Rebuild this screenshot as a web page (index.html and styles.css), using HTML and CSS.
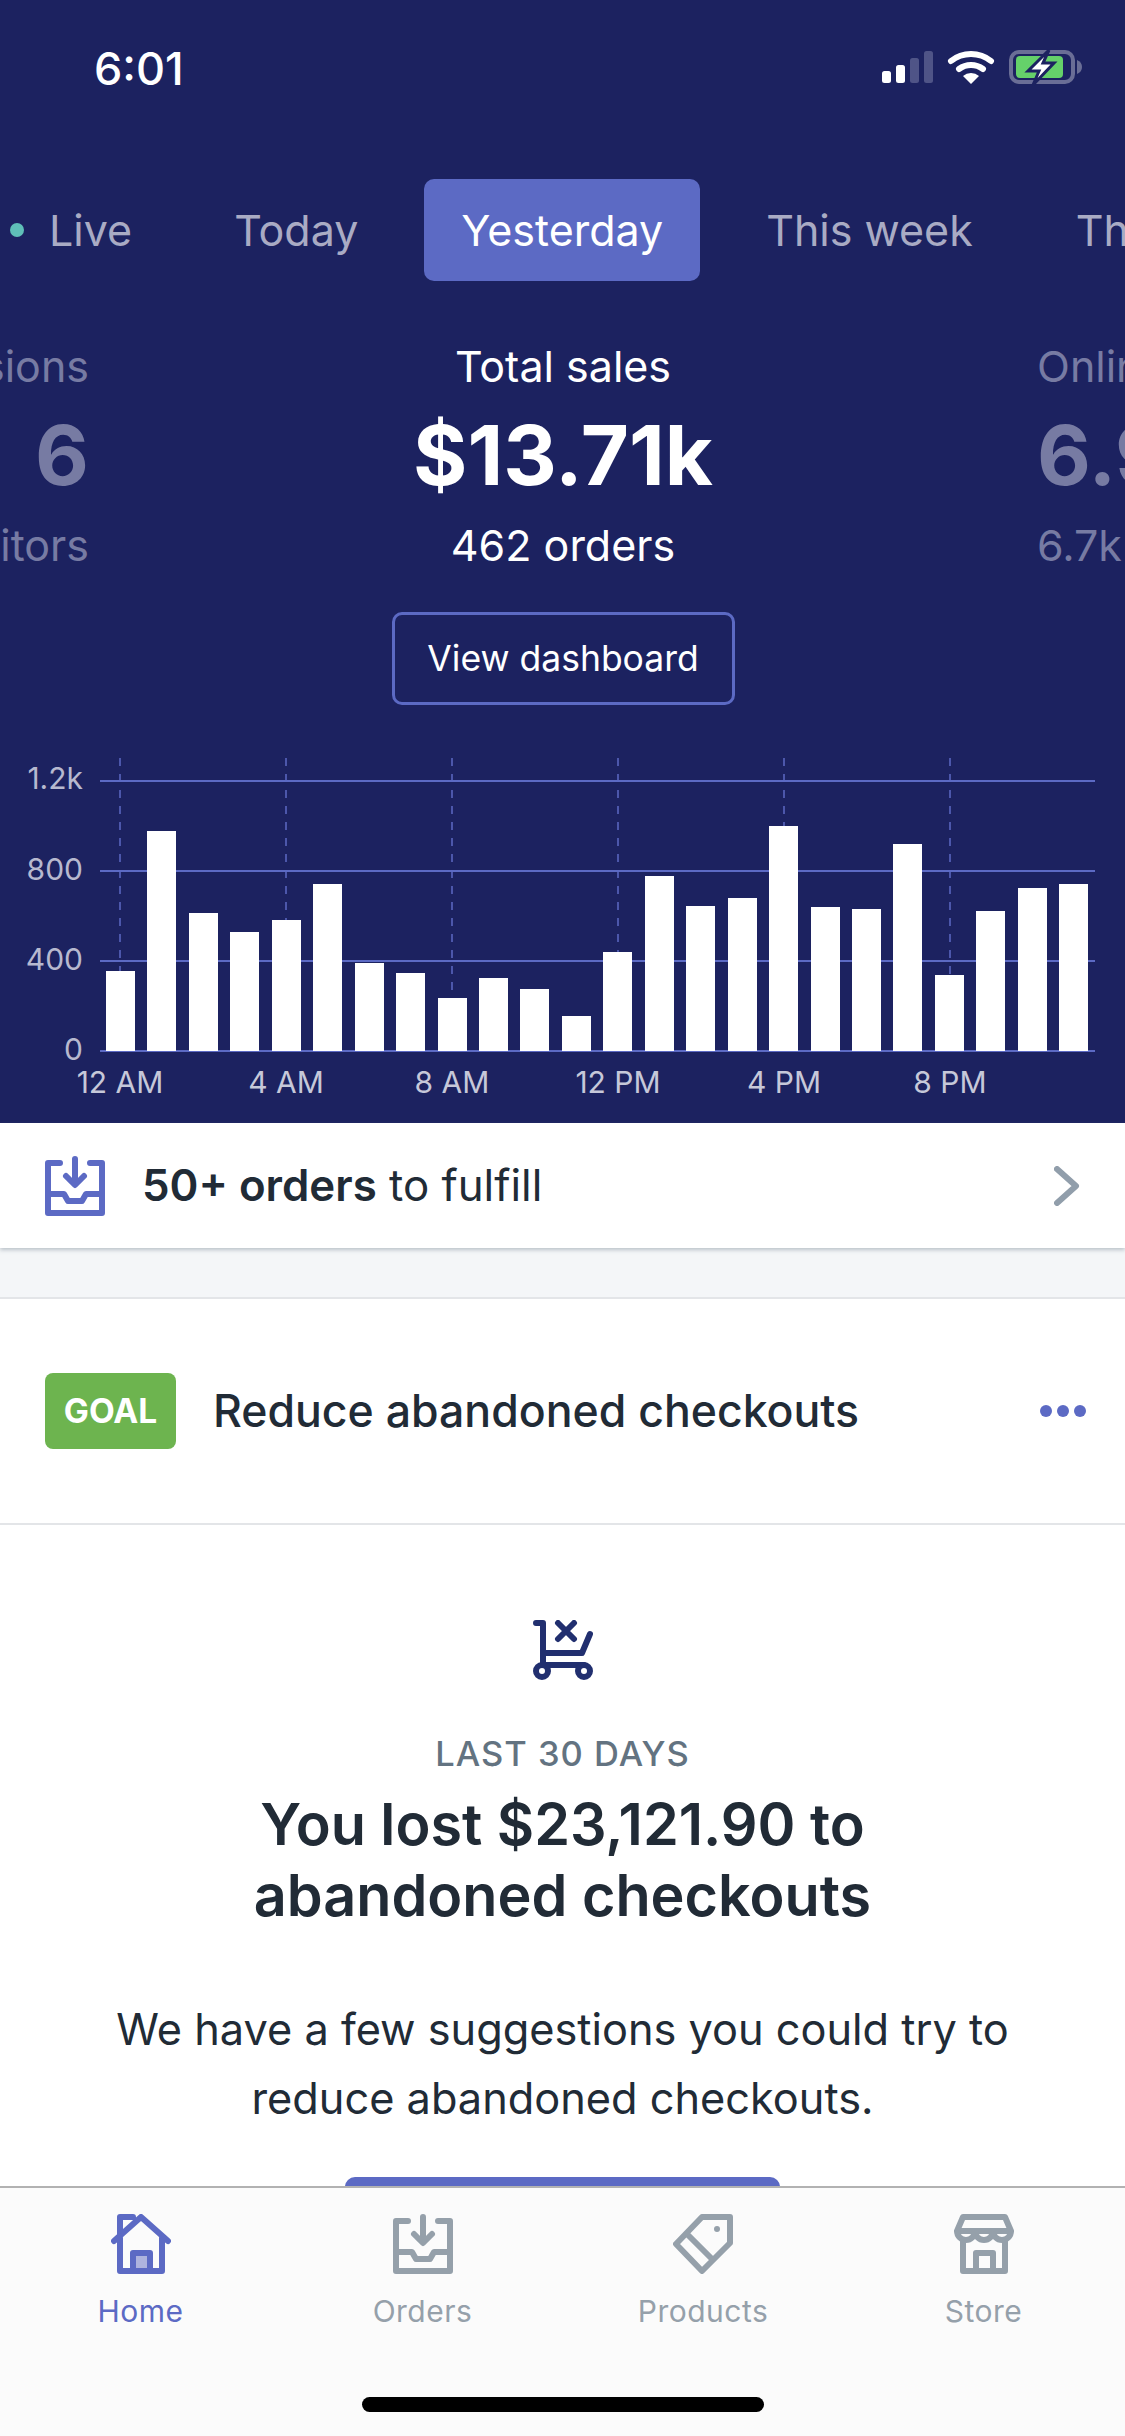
FILE: index.html
```html
<!DOCTYPE html>
<html lang="en">
<head>
<meta charset="UTF-8">
<title>Home</title>
<link rel="stylesheet" href="styles.css">
</head>
<body>
<div class="phone">
  <main class="content">
    <header class="hero">
      <div class="status">
        <span class="time">6:01</span>
        <svg class="status-icons" width="200" height="40" viewBox="882 50 200 40">
          <rect x="882" y="73" width="9" height="12" rx="2.5" fill="#fff"/>
          <rect x="896" y="67" width="9" height="18" rx="2.5" fill="#fff"/>
          <rect x="910" y="60" width="9" height="25" rx="2.5" fill="#4f5487"/>
          <rect x="924" y="53" width="9" height="32" rx="2.5" fill="#4f5487"/>
          <path d="M951 63 A32 32 0 0 1 991 63" fill="none" stroke="#fff" stroke-width="6" stroke-linecap="round"/>
          <path d="M959 71 A20 20 0 0 1 983 71" fill="none" stroke="#fff" stroke-width="6" stroke-linecap="round"/>
          <path d="M963 78 A12 12 0 0 1 979 78 L971 86 Z" fill="#fff"/>
          <rect x="1011" y="54" width="62" height="30" rx="8" fill="none" stroke="#6a6e96" stroke-width="4"/>
          <rect x="1016" y="58" width="47" height="22" rx="4" fill="#65d16a"/>
          <path d="M1077 62 Q1082 64 1082 69 Q1082 74 1077 76 Z" fill="#6a6e96"/>
          <path d="M1049 52 L1028 73 H1039 L1033 87 L1054 65 H1043 Z" fill="#fff" stroke="#1c2260" stroke-width="3"/>
        </svg>
      </div>

      <nav class="tabs">
        <a class="tab tab-live"><i class="live-dot"></i>Live</a>
        <a class="tab">Today</a>
        <a class="tab tab-active">Yesterday</a>
        <a class="tab">This week</a>
        <a class="tab">This month</a>
      </nav>

      <section class="stats">
        <div class="stat stat-left">
          <p class="stat-label">Online sessions</p>
          <p class="stat-value">6</p>
          <p class="stat-sub">6 visitors</p>
        </div>
        <div class="stat stat-main">
          <p class="stat-label">Total sales</p>
          <p class="stat-value">$13.71k</p>
          <p class="stat-sub">462 orders</p>
          <a class="dash-btn">View dashboard</a>
        </div>
        <div class="stat stat-right">
          <p class="stat-label">Online store sessions</p>
          <p class="stat-value">6.9k</p>
          <p class="stat-sub">6.7k visitors</p>
        </div>
      </section>

      <svg class="chart" width="1125" height="418" viewBox="0 705 1125 418">
        <g class="chart-vlines">
          <path d="M120 758V1051M286 758V1051M452 758V1051M618 758V1051M784 758V1051M950 758V1051"/>
        </g>
        <g class="chart-hlines">
          <path d="M100 781H1095M100 871H1095M100 961H1095M100 1051H1095"/>
        </g>
        <g class="chart-bars">
          <rect x="106" y="971" width="29" height="80"/>
          <rect x="147" y="831" width="29" height="220"/>
          <rect x="189" y="913" width="29" height="138"/>
          <rect x="230" y="932" width="29" height="119"/>
          <rect x="272" y="920" width="29" height="131"/>
          <rect x="313" y="884" width="29" height="167"/>
          <rect x="355" y="963" width="29" height="88"/>
          <rect x="396" y="973" width="29" height="78"/>
          <rect x="438" y="998" width="29" height="53"/>
          <rect x="479" y="978" width="29" height="73"/>
          <rect x="520" y="989" width="29" height="62"/>
          <rect x="562" y="1016" width="29" height="35"/>
          <rect x="603" y="952" width="29" height="99"/>
          <rect x="645" y="876" width="29" height="175"/>
          <rect x="686" y="906" width="29" height="145"/>
          <rect x="728" y="898" width="29" height="153"/>
          <rect x="769" y="826" width="29" height="225"/>
          <rect x="811" y="907" width="29" height="144"/>
          <rect x="852" y="909" width="29" height="142"/>
          <rect x="893" y="844" width="29" height="207"/>
          <rect x="935" y="975" width="29" height="76"/>
          <rect x="976" y="911" width="29" height="140"/>
          <rect x="1018" y="888" width="29" height="163"/>
          <rect x="1059" y="884" width="29" height="167"/>
        </g>
        <g class="chart-y">
          <text x="83" y="789">1.2k</text>
          <text x="83" y="880">800</text>
          <text x="83" y="970">400</text>
          <text x="83" y="1060">0</text>
        </g>
        <g class="chart-x">
          <text x="120" y="1093">12 AM</text>
          <text x="286" y="1093">4 AM</text>
          <text x="452" y="1093">8 AM</text>
          <text x="618" y="1093">12 PM</text>
          <text x="784" y="1093">4 PM</text>
          <text x="950" y="1093">8 PM</text>
        </g>
      </svg>
    </header>

    <a class="fulfill">
      <svg class="ico" viewBox="0 0 60 60">
        <path d="M15 7H3V57H57V7H45M30 3V28M21 20L30 29L39 20M3 38H19L23 45H37L41 38H57"/>
      </svg>
      <span class="fulfill-text"><b>50+ orders</b> to fulfill</span>
      <svg class="chevron" width="26" height="40" viewBox="0 0 26 40">
        <path d="M3 3L22 20L3 37"/>
      </svg>
    </a>

    <div class="gap"></div>

    <div class="goal">
      <span class="goal-badge">GOAL</span>
      <span class="goal-title">Reduce abandoned checkouts</span>
      <span class="dots"><i></i><i></i><i></i></span>
    </div>

    <section class="card">
      <svg class="ico cart" viewBox="0 0 60 60">
        <path d="M3 3H10V45H51M10 33H49L57 14M25 3L41 19M41 3L25 19"/>
        <circle cx="9" cy="51" r="6"/>
        <circle cx="51" cy="51" r="6"/>
      </svg>
      <p class="card-eyebrow">LAST 30 DAYS</p>
      <h2 class="card-title">You lost $23,121.90 to<br>abandoned checkouts</h2>
      <p class="card-body">We have a few suggestions you could try to<br>reduce abandoned checkouts.</p>
      <a class="card-btn">View suggestions</a>
    </section>
  </main>

  <footer class="tabbar">
    <div class="tabbar-row">
      <a class="nav-item nav-active">
        <svg class="ico" viewBox="0 0 60 60">
          <path class="door-fill" d="M24 42H36V54H24Z"/>
          <path d="M3 27L30 3L57 27M9 24V57H51V24M9 21V3H22M22 57V39H39V57"/>
        </svg>
        <span>Home</span>
      </a>
      <a class="nav-item">
        <svg class="ico" viewBox="0 0 60 60">
          <path d="M15 7H3V57H57V7H45M30 3V28M21 20L30 29L39 20M3 38H19L23 45H37L41 38H57"/>
        </svg>
        <span>Orders</span>
      </a>
      <a class="nav-item">
        <svg class="ico" viewBox="0 0 60 60">
          <path d="M29 3H57V29L29 57L3 30ZM14 20L40 46"/>
          <circle class="tag-hole" cx="44" cy="15" r="3"/>
        </svg>
        <span>Products</span>
      </a>
      <a class="nav-item">
        <svg class="ico" viewBox="0 0 60 60">
          <path d="M3 17L9 3H51L57 17M3 17H57M3 17A9 9 0 0 0 21 17A9 9 0 0 0 39 17A9 9 0 0 0 57 17M9 27V57H51V27M22 57V39H39V57"/>
        </svg>
        <span>Store</span>
      </a>
    </div>
    <div class="home-bar"></div>
  </footer>
</div>
</body>
</html>
```
FILE: styles.css
```css
* {
  box-sizing: border-box;
}
html, body {
  margin: 0;
  padding: 0;
}
body {
  font-family: Inter, "Noto Sans", sans-serif;
  color: #212b36;
  background: #fff;
}
p, h2 {
  margin: 0;
}
.phone {
  width: 1125px;
  height: 2436px;
  display: flex;
  flex-direction: column;
  overflow: hidden;
}
.content {
  flex: 1;
  min-height: 0;
  overflow: hidden;
}

/* dark top part */
.hero {
  height: 1123px;
  background: #1c2260;
  color: #fff;
  overflow: hidden;
}
.status {
  height: 136px;
  display: flex;
  align-items: center;
  justify-content: space-between;
  padding: 0 43px 0 94px;
}
.time {
  font-size: 45px;
  font-weight: 500;
}
.status-icons {
  display: block;
}

.tabs {
  display: flex;
  gap: 29px;
  height: 102px;
  margin-top: 43px;
  white-space: nowrap;
}
.tab {
  display: flex;
  align-items: center;
  flex: none;
  padding: 0 37px;
  border-radius: 10px;
  font-size: 43px;
  color: #a9abc4;
}
.tab-live {
  padding-left: 10px;
  padding-right: 36px;
}
.live-dot {
  width: 14px;
  height: 14px;
  margin-right: 25px;
  border-radius: 50%;
  background: #5fbfb8;
}
.tab-active {
  background: #5c6ac4;
  color: #fff;
}

.stats {
  display: grid;
  grid-template-columns: 89px 1fr 88px;
  margin-top: 60px;
  height: 364px;
  overflow: hidden;
}
.stat {
  display: flex;
  flex-direction: column;
  min-width: 0;
  white-space: nowrap;
}
.stat-label {
  height: 50px;
  line-height: 50px;
  font-size: 43px;
}
.stat-value {
  height: 90px;
  line-height: 90px;
  margin-top: 19px;
  font-size: 83px;
  font-weight: 700;
}
.stat-sub {
  height: 50px;
  line-height: 50px;
  margin-top: 20px;
  font-size: 43px;
}
.stat-main {
  align-items: center;
}
.stat-left {
  align-items: flex-end;
  color: #777ba3;
}
.stat-right {
  align-items: flex-start;
  color: #777ba3;
}
.dash-btn {
  width: 343px;
  height: 93px;
  margin-top: 42px;
  border: 3px solid #5c6ac4;
  border-radius: 10px;
  text-align: center;
  line-height: 87px;
  font-size: 35.5px;
}

.chart {
  display: block;
}
.chart-vlines path {
  fill: none;
  stroke: #5c6ac4;
  stroke-width: 1.5;
  stroke-dasharray: 8 8;
}
.chart-hlines path {
  fill: none;
  stroke: #5c6ac4;
  stroke-width: 2;
}
.chart-bars rect {
  fill: #fff;
}
.chart-y text {
  text-anchor: end;
  font-size: 30px;
  fill: #b7b9cf;
}
.chart-x text {
  text-anchor: middle;
  font-size: 30px;
  fill: #c6c8d9;
}

/* shared stroke icon */
.ico {
  display: block;
  width: 60px;
  height: 60px;
  flex: none;
  fill: none;
  stroke: currentColor;
  stroke-width: 6;
  stroke-linecap: round;
  stroke-linejoin: round;
}

.fulfill {
  display: flex;
  align-items: center;
  height: 125px;
  padding: 0 45px;
  background: #fff;
  box-shadow: 0 2px 4px rgba(99, 115, 129, 0.4);
  position: relative;
  color: #5c6ac4;
}
.fulfill-text {
  flex: 1;
  margin-left: 37px;
  font-size: 43.8px;
  color: #212b36;
}
.fulfill-text b {
  font-weight: 600;
}
.chevron {
  fill: none;
  stroke: #919eab;
  stroke-width: 6;
  stroke-linecap: round;
  stroke-linejoin: round;
}

.gap {
  height: 49px;
  background: #f4f6f8;
}

.goal {
  display: flex;
  align-items: center;
  height: 228px;
  padding: 0 39px 0 45px;
  border-top: 2px solid #e3e5e8;
  border-bottom: 2px solid #e3e5e8;
}
.goal-badge {
  width: 131px;
  height: 76px;
  border-radius: 8px;
  background: #6db44f;
  color: #fff;
  text-align: center;
  line-height: 76px;
  font-size: 33.5px;
  font-weight: 700;
}
.goal-title {
  flex: 1;
  margin-left: 37px;
  font-size: 44.6px;
  font-weight: 500;
}
.dots {
  display: flex;
  gap: 5px;
}
.dots i {
  width: 12px;
  height: 12px;
  border-radius: 50%;
  background: #5c6ac4;
}

.card {
  display: flex;
  flex-direction: column;
  align-items: center;
  padding-top: 95px;
  text-align: center;
}
.cart {
  color: #212f6f;
}
.card-eyebrow {
  margin-top: 52px;
  line-height: 44px;
  font-size: 34.5px;
  font-weight: 500;
  letter-spacing: 1px;
  color: #637381;
}
.card-title {
  margin-top: 13px;
  line-height: 71px;
  font-size: 57.5px;
  font-weight: 600;
}
.card-body {
  margin-top: 64px;
  line-height: 69px;
  font-size: 43.3px;
}
.card-btn {
  display: block;
  width: 435px;
  height: 88px;
  margin-top: 44px;
  border-radius: 10px;
  background: #5c6ac4;
  color: #fff;
  line-height: 88px;
  font-size: 36px;
}

/* bottom bar */
.tabbar {
  flex: none;
  height: 250px;
  background: #fbfbfb;
  border-top: 2px solid #b2b2b2;
  position: relative;
}
.tabbar-row {
  display: grid;
  grid-template-columns: 281px 283px 278px 283px;
  padding-top: 26px;
}
.nav-item {
  display: flex;
  flex-direction: column;
  align-items: center;
  color: #95a0aa;
  font-size: 30px;
  letter-spacing: 0.5px;
}
.nav-item span {
  margin-top: 20px;
  line-height: 34px;
}
.nav-active {
  color: #5c6ac4;
}
.door-fill {
  fill: #aeb3de;
  stroke: none;
}
.tag-hole {
  fill: currentColor;
  stroke: none;
}
.home-bar {
  position: absolute;
  left: 362px;
  top: 209px;
  width: 402px;
  height: 15px;
  border-radius: 8px;
  background: #000;
}
```
